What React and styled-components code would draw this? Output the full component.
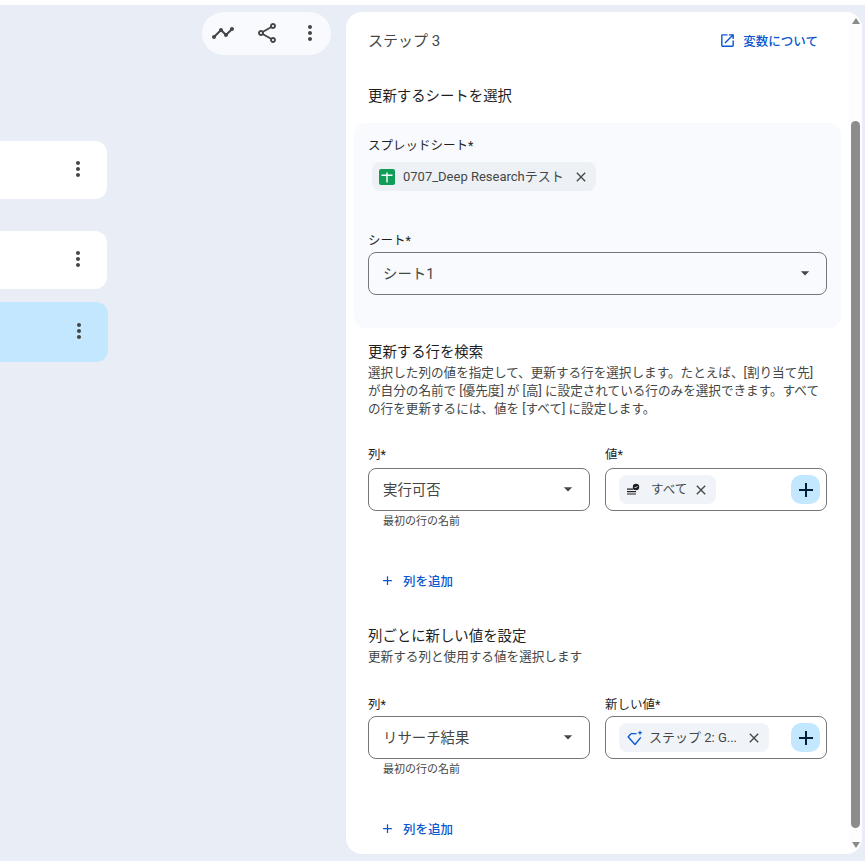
import styled, { createGlobalStyle } from 'styled-components'
import { MdAdd, MdArrowDropDown, MdClose, MdMoreVert, MdOpenInNew, MdOutlineShare, MdTimeline } from 'react-icons/md'

const GlobalStyle = createGlobalStyle`
  html, body {
    margin: 0;
    padding: 0;
    height: 100%;
    overflow: hidden;
    background: #fff;
    font-family: Roboto, "Noto Sans CJK JP", sans-serif;
    color: #1f1f1f;
  }
  * { box-sizing: border-box; }
`

const Page = styled.div`
  width: 865px;
  height: 864px;
  padding-top: 5px;
  background: #fff;
`

const Workspace = styled.div`
  height: 856px;
  background: #e9eef6;
  display: flex;
  padding: 7px 3px 7px 0;
`

const Canvas = styled.div`
  width: 346px;
  flex: none;
  display: flex;
  flex-direction: column;
`

const Toolbar = styled.div`
  align-self: flex-end;
  margin-right: 15px;
  width: 129px;
  height: 43px;
  border-radius: 22px;
  background: #f8fafd;
  display: flex;
  align-items: center;
  padding: 0 0 2px 9px;
  gap: 19.5px;
  color: #444746;
  font-size: 24px;

  svg { display: block; flex: none; }
`

const StepCard = styled.div`
  width: ${(p) => (p.$active ? 108 : 107)}px;
  height: ${(p) => (p.$active ? 60 : 58)}px;
  margin-top: ${(p) => p.$gap}px;
  background: ${(p) => (p.$active ? '#c2e7ff' : '#fff')};
  border-radius: 0 12px 12px 0;
  display: flex;
  align-items: center;
  justify-content: flex-end;
  padding: 0 17px 2px 0;
  color: #444746;
  font-size: 24px;
`

const Panel = styled.div`
  flex: 1;
  display: flex;
  background: #fff;
  border-radius: 16px;
  overflow: hidden;
`

const PanelBody = styled.div`
  flex: 1;
  min-width: 0;
  padding: 0 8px;
`

const Scrollbar = styled.div`
  width: 13px;
  flex: none;
  display: flex;
  flex-direction: column;
  align-items: center;
  background: #fdfdfd;
`

const ScrollArrow = styled.div`
  width: 0;
  height: 0;
  margin-top: ${(p) => (p.$up ? 6 : 14)}px;
  border-left: 4.5px solid transparent;
  border-right: 4.5px solid transparent;
  ${(p) => (p.$up ? 'border-bottom: 6px solid #8a8a8a;' : 'border-top: 6px solid #8a8a8a;')}
`

const ScrollThumb = styled.div`
  width: 9px;
  height: 707px;
  margin-top: 97px;
  border-radius: 5px;
  background: #8c8c8c;
`

const PanelHeader = styled.div`
  height: 56px;
  padding: 0 23px 0 14px;
  display: flex;
  align-items: center;
  justify-content: space-between;
`

const StepTitle = styled.div`
  font-size: 15px;
  color: #444746;
  padding-bottom: 2px;
`

const DocsLink = styled.div`
  display: flex;
  align-items: center;
  gap: 7px;
  color: #0b57d0;
  font-size: 12.5px;
  font-weight: 500;

  svg { font-size: 17px; }
`

const SectionHeading = styled.div`
  font-size: 14.4px;
  line-height: 20px;
  color: #1f1f1f;
  padding-left: 14px;
  margin-top: ${(p) => p.$top || 0}px;
`

const SheetBox = styled.div`
  background: #f8fafd;
  border-radius: 12px;
  height: 205px;
  margin-top: 16px;
  padding: 14px 14px 0;
`

const FieldLabel = styled.div`
  font-size: 12.5px;
  line-height: 18px;
  color: #1f1f1f;
  margin-top: ${(p) => p.$top || 0}px;
  margin-bottom: ${(p) => p.$bottom ?? 4}px;
`

const Chip = styled.div`
  display: inline-flex;
  align-items: center;
  height: 29px;
  border-radius: 8px;
  background: ${(p) => p.$bg || '#f0f4f9'};
  color: #444746;
  font-size: ${(p) => p.$font || 13}px;
  padding: 0 7px;
  flex: none;

  svg { flex: none; display: block; }
`

const ChipLabel = styled.span`
  margin-left: ${(p) => p.$left}px;
  margin-right: ${(p) => p.$right}px;
  padding-bottom: 2px;
  white-space: nowrap;
`

const CloseIcon = styled(MdClose)`
  font-size: 16px;
  color: #444746;
`

const SheetChipRow = styled.div`
  padding-left: 4px;
  display: flex;
`

const Select = styled.div`
  height: 43px;
  border: 1px solid #747775;
  border-radius: 8px;
  display: flex;
  align-items: center;
  justify-content: space-between;
  padding: 0 11px 2px 14px;
  font-size: 14.4px;
  color: #444746;

  svg { font-size: 20px; color: #444746; }
`

const Description = styled.div`
  margin-top: 1px;
  padding: 0 14px;
  font-size: 12.6px;
  line-height: 18px;
  color: #444746;
`

const FieldGrid = styled.div`
  display: grid;
  grid-template-columns: 222px 222px;
  column-gap: 15px;
  padding-left: 14px;
  margin-top: ${(p) => p.$top}px;
`

const ChipInput = styled.div`
  height: 43px;
  border: 1px solid #747775;
  border-radius: 8px;
  display: flex;
  align-items: center;
  justify-content: space-between;
  padding: 0 6px 0 13px;
`

const PlusButton = styled.div`
  width: 29px;
  height: 29px;
  border-radius: 10px;
  background: #c2e7ff;
  color: #001d35;
  display: flex;
  align-items: center;
  justify-content: center;
  font-size: 24px;
`

const Helper = styled.div`
  font-size: 11px;
  line-height: 14px;
  color: #444746;
  padding: 4px 0 0 15px;
`

const AddColumn = styled.div`
  display: flex;
  align-items: center;
  gap: 8px;
  padding-left: 26px;
  margin-top: ${(p) => p.$top}px;
  height: 20px;
  color: #0b57d0;
  font-size: 12.5px;
  font-weight: 500;

  svg { font-size: 15px; }
`

const SheetsIcon = () => (
  <svg width="16" height="16" viewBox="0 0 16 16">
    <rect width="16" height="16" rx="2" fill="#0f9d58" />
    <path d="M7.3 3.5h1.4v2.1h4.8V7H8.7v6.5H7.3V7H2.5V5.6h4.8z" fill="#fff" />
  </svg>
)

const AllRowsIcon = () => (
  <svg width="14" height="14" viewBox="0 0 14 14">
    <path d="M1 6.2h6.5M1 8.6h9M1 11h9" stroke="#1f1f1f" strokeWidth="1.2" fill="none" />
    <circle cx="10" cy="4" r="3.2" fill="#1f1f1f" />
    <path d="M8.6 4l1 1 1.8-1.9" stroke="#fff" strokeWidth="0.9" fill="none" />
  </svg>
)

const GemIcon = () => (
  <svg width="18" height="18" viewBox="0 0 18 18" fill="none">
    <path d="M5 4.6h5.5M14.8 8.4L9 15.5 2.2 8 5 4.6" stroke="#0b57d0" strokeWidth="1.4" strokeLinejoin="round" />
    <path d="M14 1.2l.7 1.9 1.9.7-1.9.7-.7 1.9-.7-1.9-1.9-.7 1.9-.7z" fill="#0b57d0" />
  </svg>
)

const ColumnFields = ({ top, labelGap, valueLabel, column, chip }) => (
  <FieldGrid $top={top}>
    <div>
      <FieldLabel $bottom={labelGap}>列*</FieldLabel>
      <Select>
        {column}
        <MdArrowDropDown />
      </Select>
      <Helper>最初の行の名前</Helper>
    </div>
    <div>
      <FieldLabel $bottom={labelGap}>{valueLabel}</FieldLabel>
      <ChipInput>
        {chip}
        <PlusButton>
          <MdAdd />
        </PlusButton>
      </ChipInput>
    </div>
  </FieldGrid>
)

export default function App() {
  return (
    <Page>
      <GlobalStyle />
      <Workspace>
        <Canvas>
          <Toolbar>
            <MdTimeline />
            <MdOutlineShare />
            <MdMoreVert />
          </Toolbar>
          <StepCard $gap={86}>
            <MdMoreVert />
          </StepCard>
          <StepCard $gap={32}>
            <MdMoreVert />
          </StepCard>
          <StepCard $gap={13} $active>
            <MdMoreVert />
          </StepCard>
        </Canvas>
        <Panel>
          <PanelBody>
            <PanelHeader>
              <StepTitle>ステップ 3</StepTitle>
              <DocsLink>
                <MdOpenInNew />
                変数について
              </DocsLink>
            </PanelHeader>
            <SectionHeading $top={19}>更新するシートを選択</SectionHeading>
            <SheetBox>
              <FieldLabel $bottom={7}>スプレッドシート*</FieldLabel>
              <SheetChipRow>
                <Chip $bg="#edf1f6">
                  <SheetsIcon />
                  <ChipLabel $left={8} $right={9}>0707_Deep Researchテスト</ChipLabel>
                  <CloseIcon />
                </Chip>
              </SheetChipRow>
              <FieldLabel $top={41} $bottom={2}>シート*</FieldLabel>
              <Select>
                シート1
                <MdArrowDropDown />
              </Select>
            </SheetBox>
            <SectionHeading $top={15}>更新する行を検索</SectionHeading>
            <Description>
              選択した列の値を指定して、更新する行を選択します。たとえば、[割り当て先] が自分の名前で [優先度] が [高] に設定されている行のみを選択できます。すべての行を更新するには、値を [すべて] に設定します。
            </Description>
            <ColumnFields
              top={28}
              labelGap={4}
              valueLabel="値*"
              column="実行可否"
              chip={
                <Chip $font={12.5}>
                  <AllRowsIcon />
                  <ChipLabel $left={11} $right={6}>すべて</ChipLabel>
                  <CloseIcon />
                </Chip>
              }
            />
            <AddColumn $top={41}>
              <MdAdd />
              列を追加
            </AddColumn>
            <SectionHeading $top={37}>列ごとに新しい値を設定</SectionHeading>
            <Description>更新する列と使用する値を選択します</Description>
            <ColumnFields
              top={30}
              labelGap={2}
              valueLabel="新しい値*"
              column="リサーチ結果"
              chip={
                <Chip>
                  <GemIcon />
                  <ChipLabel $left={5} $right={9}>ステップ 2: G...</ChipLabel>
                  <CloseIcon />
                </Chip>
              }
            />
            <AddColumn $top={41}>
              <MdAdd />
              列を追加
            </AddColumn>
          </PanelBody>
          <Scrollbar>
            <ScrollArrow $up />
            <ScrollThumb />
            <ScrollArrow />
          </Scrollbar>
        </Panel>
      </Workspace>
    </Page>
  )
}
